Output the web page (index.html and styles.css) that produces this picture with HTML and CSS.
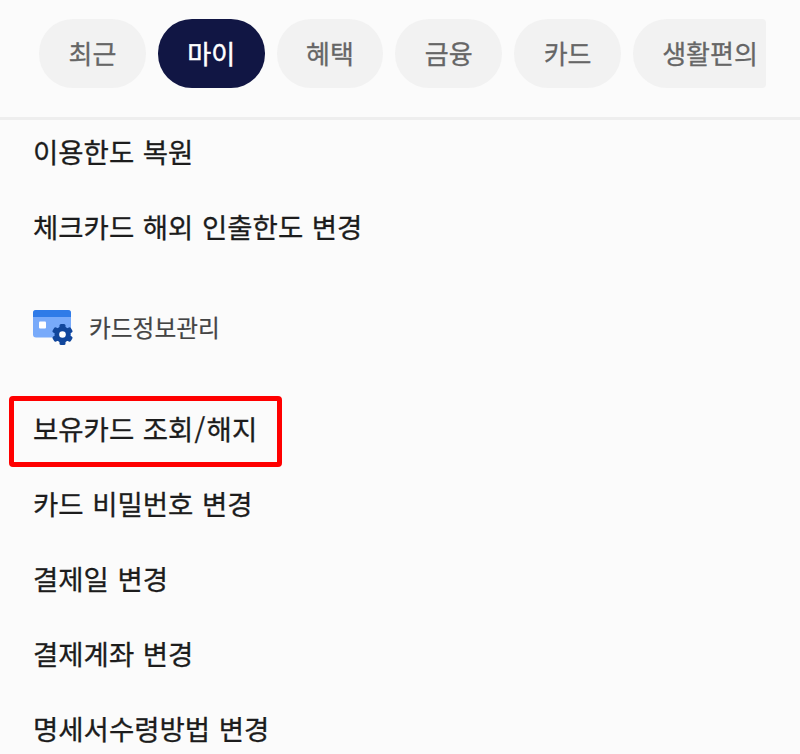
FILE: index.html
```html
<!DOCTYPE html>
<html lang="ko">
<head>
<meta charset="utf-8">
<title>메뉴</title>
<link rel="stylesheet" href="styles.css">
</head>
<body>
<nav class="tabs">
<button class="tab">최근</button>
<button class="tab active">마이</button>
<button class="tab">혜택</button>
<button class="tab">금융</button>
<button class="tab">카드</button>
<button class="tab last">생활편의</button>
</nav>
<main class="menu">
<a class="item"><span>이용한도 복원</span></a>
<a class="item before-heading"><span>체크카드 해외 인출한도 변경</span></a>
<h2 class="heading">
<svg class="icon" width="42" height="38" viewBox="0 0 42 38">
<rect x="0" y="1" width="38" height="27.500" rx="3" fill="#78aafa"/>
<path d="M0 8V4a3 3 0 0 1 3-3h32a3 3 0 0 1 3 3v4z" fill="#2f7be8"/>
<rect x="6" y="12.500" width="7" height="7" rx="1" fill="#fff"/>
<g fill="#12479c"><circle cx="29.500" cy="25.500" r="8"/><rect x="26.500" y="15" width="6" height="21" rx="1.500"/><rect x="26.500" y="15" width="6" height="21" rx="1.500" transform="rotate(60 29.500 25.500)"/><rect x="26.500" y="15" width="6" height="21" rx="1.500" transform="rotate(120 29.500 25.500)"/></g>
<circle cx="29.500" cy="25.500" r="3.300" fill="#fff"/>
</svg>
<span>카드정보관리</span>
</h2>
<a class="item marked"><span>보유카드 조회<span class="slash">/</span>해지</span></a>
<a class="item"><span>카드 비밀번호 변경</span></a>
<a class="item"><span>결제일 변경</span></a>
<a class="item"><span>결제계좌 변경</span></a>
<a class="item"><span>명세서수령방법 변경</span></a>
</main>
</body>
</html>
```
FILE: styles.css
```css
* { box-sizing: border-box; }
body { margin: 0; height: 754px; overflow: hidden; background: #fbfbfb; color: #1c1c1c; font-family: "Noto Sans CJK KR", sans-serif; }
.tabs { display: flex; gap: 12px; height: 120px; padding: 19px 34px 0 39px; border-bottom: 3px solid #eee; overflow: hidden; }
.tab { flex: 0 0 106.800px; height: 69px; padding: 0 0 2px 0; border: 0; border-radius: 34px; background: #f2f2f2; color: #666; font: 400 26px/67px "Noto Sans CJK KR", sans-serif; -webkit-text-stroke: 0.300px; }
.active { background: #111644; color: #fff; -webkit-text-stroke: 0.500px; }
.last { border-radius: 34px 4px 4px 34px; flex-basis: 133px; padding-left: 21px; }
.menu { padding-left: 33px; }
.item { display: flex; align-items: center; height: 75px; font-size: 27.500px; word-spacing: 0.900px; white-space: nowrap; -webkit-text-stroke: 0.300px; }
.item:first-child { height: 62px; margin-bottom: 6px; }
.before-heading { margin-bottom: 1px; }
.heading { display: flex; align-items: center; gap: 14px; height: 126px; margin: 0 0 6px; font-size: 23.700px; font-weight: 400; color: #444; -webkit-text-stroke: 0.200px; }
.icon { margin-top: 2px; }
.marked { width: 273px; height: 71px; margin: 0 0 -2px -24px; padding: 0 0 8px 19px; border: 5px solid #f00; border-radius: 4px; }
.slash { margin: 0 1.200px; }
```
